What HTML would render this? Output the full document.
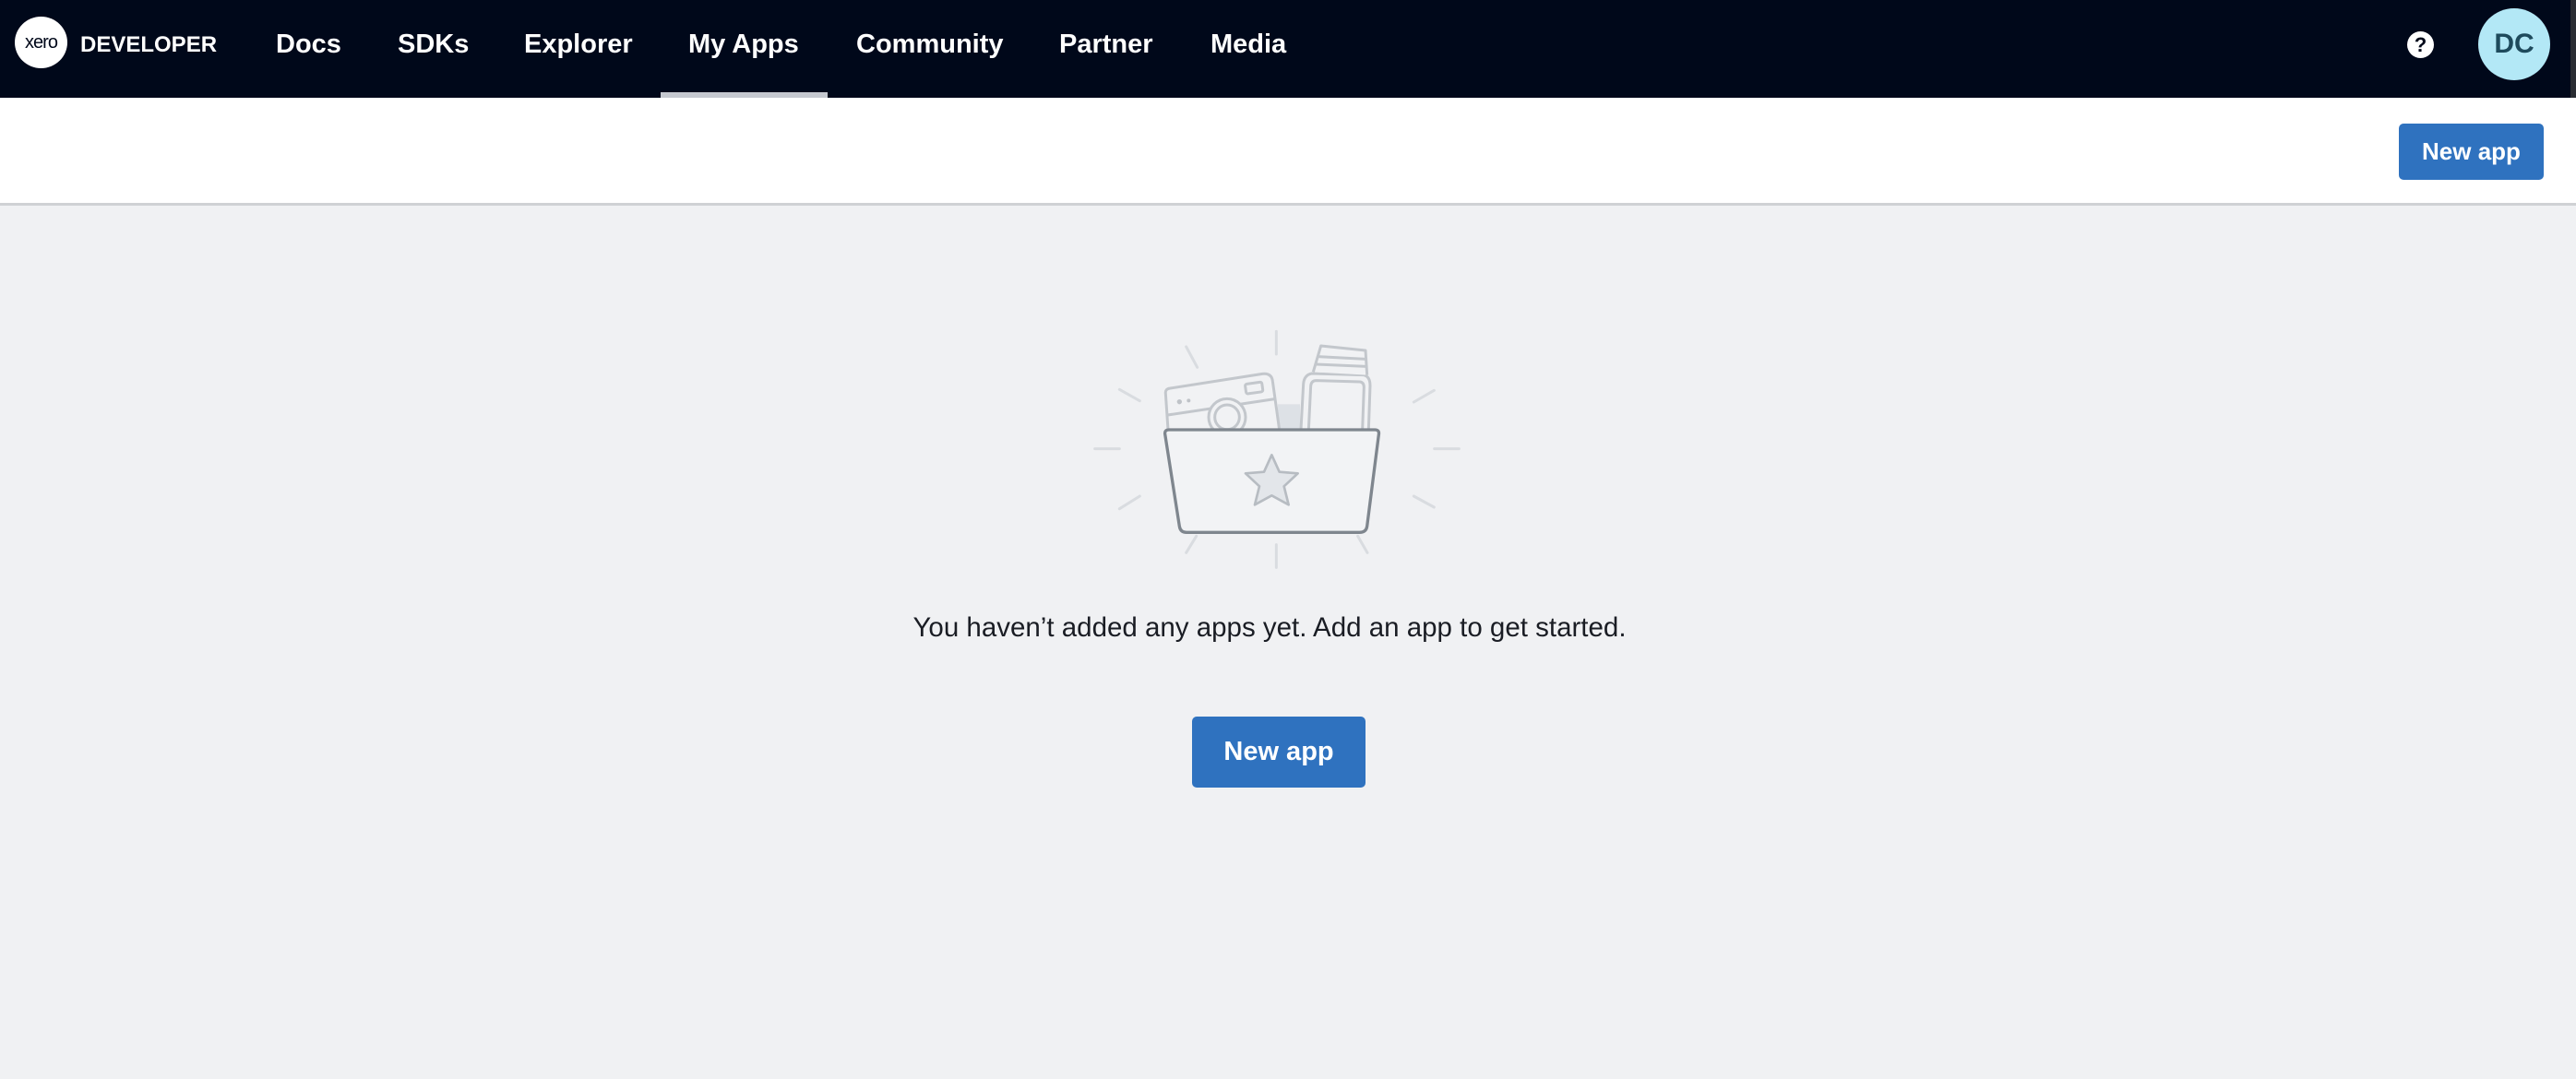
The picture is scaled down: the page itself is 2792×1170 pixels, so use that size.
<!DOCTYPE html>
<html><head><meta charset="utf-8"><style>
*{margin:0;padding:0;box-sizing:border-box}
body{width:2792px;height:1170px;background:#f0f1f3;font-family:"Liberation Sans",sans-serif;position:relative;overflow:hidden}
.nav{position:absolute;left:0;top:0;width:2792px;height:106px;background:#00081a}
.nav a{position:absolute;top:30px;color:#fff;font-weight:bold;font-size:29px;text-decoration:none;line-height:36px}
.bar{position:absolute;left:0;top:106px;width:2792px;height:117px;background:#fff;border-bottom:3px solid #cfd1d4}
.btn{position:absolute;background:#2f72bf;color:#fff;font-weight:bold;border-radius:5px;text-align:center}
</style></head><body>
<div class="nav">
  <div style="position:absolute;left:16px;top:18px;width:57px;height:56px;border-radius:50%;background:#fff;color:#00081a;font-size:20px;text-align:center;line-height:56px;letter-spacing:-1px">xero</div>
  <div style="position:absolute;left:87px;top:34px;color:#fff;font-weight:bold;font-size:24px;line-height:30px">DEVELOPER</div>
  <a style="left:299px">Docs</a>
  <a style="left:431px">SDKs</a>
  <a style="left:568px">Explorer</a>
  <a style="left:746px">My Apps</a>
  <a style="left:928px">Community</a>
  <a style="left:1148px">Partner</a>
  <a style="left:1312px">Media</a>
  <div style="position:absolute;left:716px;top:100px;width:181px;height:6px;background:#c5c8cf"></div>
  <div style="position:absolute;left:2609px;top:34px;width:29px;height:29px;border-radius:50%;background:#fff;color:#00081a;font-weight:bold;font-size:22px;text-align:center;line-height:29px">?</div>
  <div style="position:absolute;left:2686px;top:9px;width:78px;height:78px;border-radius:50%;background:#b3e8f6;color:#1e4a5c;font-weight:bold;font-size:30px;text-align:center;line-height:78px">DC</div>
  <div style="position:absolute;left:2786px;top:0;width:6px;height:106px;background:#2a2d33"></div>
</div>
<div class="bar"></div>
<div class="btn" style="left:2600px;top:134px;width:157px;height:61px;font-size:26px;line-height:61px">New app</div>
<svg style="position:absolute;left:1150px;top:340px" width="450" height="290" viewBox="0 0 1350 870">
 <g stroke="#d9dce0" stroke-width="9" stroke-linecap="round" fill="none">
  <line x1="700" y1="58" x2="700" y2="132"/><line x1="407" y1="108" x2="443" y2="175"/>
  <line x1="190" y1="247" x2="256" y2="284"/><line x1="110" y1="440" x2="190" y2="440"/>
  <line x1="190" y1="635" x2="256" y2="594"/><line x1="407" y1="778" x2="440" y2="724"/>
  <line x1="700" y1="752" x2="700" y2="826"/><line x1="996" y1="778" x2="965" y2="724"/>
  <line x1="1213" y1="630" x2="1147" y2="594"/><line x1="1214" y1="440" x2="1294" y2="440"/>
  <line x1="1147" y1="288" x2="1213" y2="250"/>
 </g>
 <rect x="705" y="295" width="72" height="85" fill="#dde1e6"/>
 <g stroke="#c3c7cc" stroke-width="9" fill="#f1f2f4" stroke-linejoin="round">
  <path d="M340 260 Q338 245 355 243 L655 196 Q685 193 688 220 L710 378 L348 378 Z"/>
  <line x1="347" y1="330" x2="695" y2="278"/>
  <rect x="600" y="226" width="55" height="32" rx="6" transform="rotate(-8 627 242)"/>
  <circle cx="540" cy="337" r="60"/><circle cx="540" cy="337" r="40"/>
  <path d="M780 378 L788 230 Q790 200 815 195 L985 200 Q1005 205 1005 235 L1000 378 Z"/>
  <path d="M805 378 L812 235 Q814 218 830 218 L972 222 Q985 224 985 240 L980 378"/>
  <path d="M820 190 L845 105 L990 120 L995 200" />
  <line x1="835" y1="140" x2="990" y2="148"/><line x1="830" y1="165" x2="993" y2="172"/>
 </g>
 <circle cx="385" cy="287" r="8" fill="#bfc3c8"/><circle cx="415" cy="283" r="6" fill="#bfc3c8"/>
 <path d="M338 392 Q336 378 352 378 L1020 378 Q1036 378 1033 394 L995 692 Q992 712 970 712 L408 712 Q388 712 385 692 Z" fill="#f2f3f5" stroke="#7f868e" stroke-width="10" stroke-linejoin="round"/>
 <path d="M685 460 L710 515 L770 520 L725 562 L740 622 L685 592 L630 622 L645 562 L600 520 L660 515 Z" fill="#e3e6ea" stroke="#b7bcc2" stroke-width="8" stroke-linejoin="round"/>
</svg>
<div style="position:absolute;left:-20px;width:2792px;top:664px;text-align:center;font-size:29.5px;color:#1a1d24">You haven’t added any apps yet. Add an app to get started.</div>
<div class="btn" style="left:1292px;top:777px;width:188px;height:77px;font-size:29px;line-height:77px">New app</div>
</body></html>
